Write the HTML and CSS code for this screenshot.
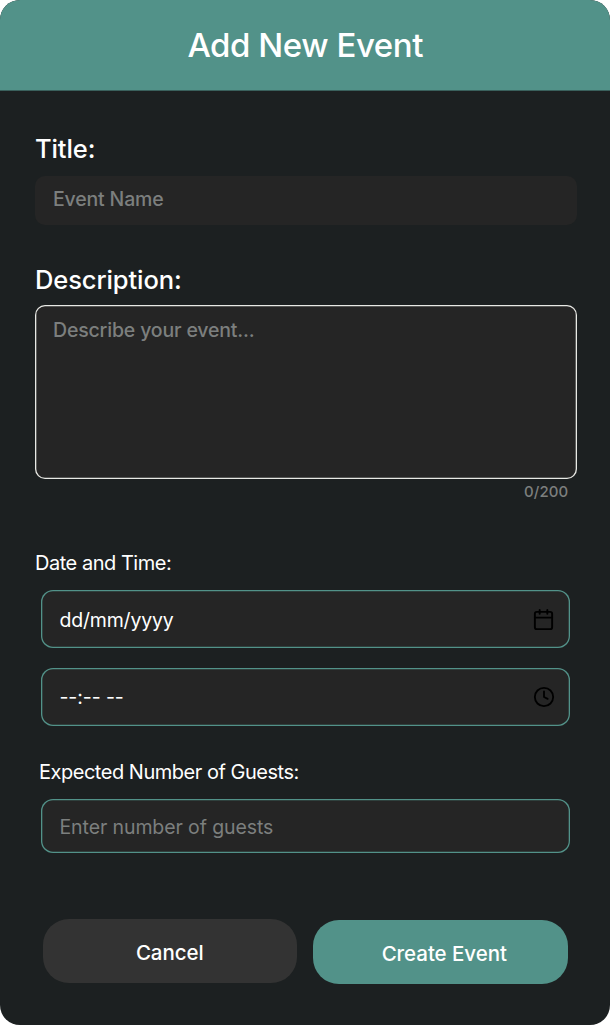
FILE: index.html
```html
<!DOCTYPE html>
<html lang="en">
<head>
<meta charset="utf-8">
<title>Add New Event</title>
<link rel="stylesheet" href="styles.css">
</head>
<body>
<main class="card">
  <header class="card-header"><h1 class="heading"><span>Add New Event</span></h1></header>
  <form class="form">
    <label class="label label-title"><span>Title:</span></label>
    <div class="field field-title"><span>Event Name</span></div>
    <label class="label label-description"><span>Description:</span></label>
    <div class="field field-description"><span>Describe your event...</span></div>
    <div class="counter"><span>0/200</span></div>
    <label class="sublabel label-date"><span>Date and Time:</span></label>
    <div class="control control-date"><span class="value date-text">dd/mm/yyyy</span>
      <svg class="icon icon-date" viewBox="0 0 24 24"><rect x="3" y="4" width="18" height="18" rx="2"/><path d="M16 2v4M8 2v4M3 10h18"/></svg>
    </div>
    <div class="control control-time"><span class="value time-text">--:-- --</span>
      <svg class="icon icon-time" viewBox="0 0 24 24"><circle cx="12" cy="12" r="10"/><path d="M12 6v6l4 2"/></svg>
    </div>
    <label class="sublabel label-guests"><span>Expected Number of Guests:</span></label>
    <div class="control control-guests"><span class="value guests-text">Enter number of guests</span></div>
    <div class="actions">
      <button class="button cancel" type="button"><span>Cancel</span></button>
      <button class="button create" type="button"><span>Create Event</span></button>
    </div>
  </form>
</main>
</body>
</html>
```
FILE: styles.css
```css
* { box-sizing: border-box; }
body {
  margin: 0;
  background: #fff;
  font-family: Inter, "Liberation Sans", sans-serif;
  color: #fff;
  overflow: hidden;
}
.card {
  width: 610.4px;
  height: 1024.6px;
  border-radius: 20px;
  background: #1c2021;
  overflow: hidden;
}
.card-header {
  height: 91px;
  background: #529289;
  border-bottom: 1px solid #3a605c;
  text-align: center;
}
.heading {
  margin: 0;
  font-size: 33px;
  font-weight: 500;
  line-height: 91px;
  letter-spacing: -0.45px;
}
.form { display: flex; flex-direction: column; padding: 0 34px 0 35px; }
.label { font-size: 25.5px; font-weight: 500; line-height: 32px; letter-spacing: -0.1px; }
.label-title { margin-top: 42px; }
.field {
  width: 542px;
  border-radius: 10px;
  background: #252525;
  color: #7c7f7e;
  font-size: 19.5px;
  font-weight: 500;
  letter-spacing: -0.17px;
  line-height: 24px;
  padding-left: 18px;
}
.field-title { height: 49px; margin-top: 11px; padding-top: 11px; }
.label-description { margin-top: 39px; }
.field-description {
  height: 174px;
  margin: 9.3px 0 0;
  padding: 13px 18px;
  box-shadow: inset 0 0 0 1.3px #e8e9e5;
}
.counter {
  margin: 3px 8px 0 0;
  color: #7c7f7e;
  font-size: 15px;
  font-weight: 500;
  letter-spacing: 0.1px;
  line-height: 20px;
  text-align: right;
}
.sublabel { font-size: 20px; line-height: 26px; letter-spacing: -0.48px; }
.label-date { margin-top: 48px; }
.control {
  display: flex;
  justify-content: space-between;
  align-items: center;
  height: 58px;
  margin: 0 6.5px 0 5.5px;
  padding: 0 15px 0 19px;
  box-shadow: inset 0 0 0 1.3px #529289;
  border-radius: 12px;
  background: #252525;
}
.control-date { margin-top: 14px; }
.control-time { margin-top: 19.3px; }
.control-guests { height: 54px; margin-top: 14px; }
.value { font-size: 19.5px; line-height: 24px; letter-spacing: -0.1px; }
.date-text { letter-spacing: -0.2px; padding-top: 2px; }
.guests-text { color: #7c7f7e; padding-top: 2px; }
.icon {
  width: 23px;
  height: 23px;
  fill: none;
  stroke: #000;
  stroke-width: 2;
  stroke-linecap: round;
  stroke-linejoin: round;
}
.icon-time { width: 22px; height: 22px; margin-right: -0.5px; }
.label-guests { margin: 33px 0 0 4px; }
.actions { display: flex; gap: 16px; margin: 66px 0 0 7.5px; }
.button {
  width: 254.5px;
  height: 64px;
  padding: 3px 0 0;
  border: 0;
  border-radius: 26px;
  color: #fff;
  font: 500 20.5px/61px Inter, "Liberation Sans", sans-serif;
  letter-spacing: -0.05px;
}
.cancel { background: #333; }
.create { margin-top: 1px; background: #529289; padding-left: 8px; }
```
